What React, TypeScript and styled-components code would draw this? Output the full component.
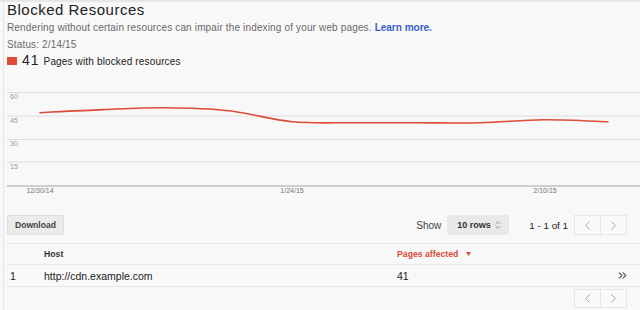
import React from 'react';
import styled, { createGlobalStyle } from 'styled-components';
import { ChevronLeft, ChevronRight, ChevronsRight, ChevronsUpDown } from 'lucide-react';

const GlobalStyle = createGlobalStyle`
  html, body {
    margin: 0;
    padding: 0;
    background: #f8f8f8;
  }
  body {
    font-family: 'Liberation Sans', Arial, sans-serif;
    color: #222;
  }
`;

const Frame = styled.div`
  border-top: 2px solid #e6e6e6;
  min-height: 308px;
`;

const Page = styled.div`
  margin-left: 3px;
  padding-left: 3px;
  border-left: 1px solid #e4e4e4;
  min-height: 308px;
  box-sizing: border-box;
`;

const Title = styled.h1`
  margin: 0;
  font-size: 15px;
  letter-spacing: 0.5px;
  line-height: 16px;
  font-weight: normal;
  color: #222;
`;

const Lead = styled.div`
  margin-top: 3px;
  font-size: 10px;
  letter-spacing: 0.15px;
  line-height: 14px;
  color: #6a6a6a;
`;

const LearnMore = styled.a`
  color: #3a5fcd;
  font-weight: bold;
  text-decoration: none;
  letter-spacing: 0;
`;

const Status = styled(Lead)``;

const CountRow = styled.div`
  display: flex;
  align-items: baseline;
  height: 16px;
  line-height: 16px;
`;

const Swatch = styled.span`
  align-self: center;
  width: 10px;
  height: 8px;
  margin-top: 1px;
  background: #dd4b39;
`;

const CountNumber = styled.span`
  margin-left: 5px;
  font-size: 14px;
  letter-spacing: 1px;
  color: #222;
`;

const CountLabel = styled.span`
  margin-left: 4px;
  font-size: 10px;
  letter-spacing: 0.15px;
  color: #222;
`;

const ChartBox = styled.svg`
  display: block;
  margin-top: 18px;
`;

const Controls = styled.div`
  display: flex;
  align-items: center;
  height: 20px;
  margin-top: 17px;
  padding-right: 13px;
`;

const Button = styled.button`
  height: 20px;
  width: 57px;
  padding: 0;
  background: #ebebeb;
  border: 1px solid #dedede;
  border-radius: 2px;
  font-family: inherit;
  font-size: 8.6px;
  font-weight: bold;
  color: #444;
`;

const Spacer = styled.div`
  flex: 1;
`;

const ShowLabel = styled.span`
  font-size: 10px;
  color: #444;
`;

const RowsSelect = styled.div`
  display: flex;
  align-items: center;
  justify-content: space-between;
  box-sizing: border-box;
  width: 62px;
  height: 20px;
  margin-left: 6px;
  padding: 0 6px 0 10px;
  background: #e9e9e9;
  border-radius: 2px;
  font-size: 9px;
  font-weight: bold;
  color: #333;
`;

const RangeText = styled.span`
  margin-left: 20px;
  font-size: 9.8px;
  color: #222;
`;

const Pager = styled.div`
  display: flex;
  margin-left: 6px;
`;

const PagerButton = styled.div`
  display: flex;
  align-items: center;
  justify-content: center;
  width: 27px;
  height: ${p => p.$h}px;
  box-sizing: border-box;
  border: 1px solid #e6e6e6;
  background: #fafafa;
  color: #999;
  & + & {
    margin-left: -1px;
  }
`;

const Table = styled.div`
  margin-top: 8px;
`;

const Row = styled.div`
  display: grid;
  grid-template-columns: 37px 353px 1fr 24px;
  align-items: center;
  height: ${p => p.$h}px;
  border-bottom: 1px solid #e6e6e6;
  border-top: ${p => (p.$first ? '1px solid #e6e6e6' : 'none')};
`;

const HeadCell = styled.div`
  font-size: 8.7px;
  font-weight: bold;
  color: ${p => (p.$active ? '#dd4b39' : '#333')};
  display: flex;
  align-items: center;
`;

const Cell = styled.div`
  font-size: 10.5px;
  color: #222;
  padding-left: ${p => p.$pad || 0}px;
`;

const MoreCell = styled.div`
  display: flex;
  align-items: center;
  color: #555;
`;

const FooterPager = styled.div`
  display: flex;
  justify-content: flex-end;
  margin-top: 2px;
  padding-right: 13px;
`;

const points: [number, number][] = [
  [40, 112.7],
  [103, 109.6],
  [166, 107.8],
  [229, 110.8],
  [292, 121.7],
  [355, 122.7],
  [418, 122.8],
  [481, 122.7],
  [544, 119.7],
  [608, 121.7],
];

const smoothPath = (pts: [number, number][]) => {
  let d = `M${pts[0][0]},${pts[0][1]}`;
  for (let i = 0; i < pts.length - 1; i++) {
    const p0 = pts[i - 1] || pts[i];
    const p1 = pts[i];
    const p2 = pts[i + 1];
    const p3 = pts[i + 2] || p2;
    const c1x = p1[0] + (p2[0] - p0[0]) / 6;
    const c1y = p1[1] + (p2[1] - p0[1]) / 6;
    const c2x = p2[0] - (p3[0] - p1[0]) / 6;
    const c2y = p2[1] - (p3[1] - p1[1]) / 6;
    d += ` C${c1x},${c1y} ${c2x},${c2y} ${p2[0]},${p2[1]}`;
  }
  return d;
};

const grid = [
  { y: 92.5, label: '60' },
  { y: 116, label: '45' },
  { y: 139.5, label: '30' },
  { y: 162, label: '15' },
];

const xLabels = [
  { x: 40, label: '12/30/14' },
  { x: 292, label: '1/24/15' },
  { x: 545, label: '2/10/15' },
];

const Chart = () => (
  <ChartBox width="633" height="112" viewBox="7 86 633 112">
    {grid.map(g => (
      <g key={g.label}>
        <line x1="7" x2="640" y1={g.y} y2={g.y} stroke="#dedede" strokeWidth="1" />
        <text x="10" y={g.y + 6.5} fontSize="7" fill="#999" fontFamily="Liberation Sans, Arial, sans-serif">
          {g.label}
        </text>
      </g>
    ))}
    <rect x="7" y="185" width="633" height="2" fill="#cfcfcf" />
    {xLabels.map(l => (
      <text key={l.label} x={l.x} y="193" fontSize="7" fill="#777" textAnchor="middle" fontFamily="Liberation Sans, Arial, sans-serif">
        {l.label}
      </text>
    ))}
    <path d={smoothPath(points)} fill="none" stroke="#dd4b39" strokeWidth="1.6" strokeLinecap="round" />
  </ChartBox>
);

const PagerButtons = ({ h }: { h: number }) => (
  <Pager>
    <PagerButton $h={h}><ChevronLeft size={15} strokeWidth={1.4} /></PagerButton>
    <PagerButton $h={h}><ChevronRight size={15} strokeWidth={1.4} /></PagerButton>
  </Pager>
);

const SortArrow = () => (
  <svg width="5" height="4" viewBox="0 0 5 4" style={{ marginLeft: 8 }}>
    <path d="M0 0 L5 0 L2.5 4 Z" fill="#dd4b39" />
  </svg>
);

const App = () => (
  <>
    <GlobalStyle />
    <Frame>
      <Page>
        <Title>Blocked Resources</Title>
        <Lead>
          Rendering without certain resources can impair the indexing of your web pages.{' '}
          <LearnMore href="#">Learn more.</LearnMore>
        </Lead>
        <Status>Status: 2/14/15</Status>
        <CountRow>
          <Swatch />
          <CountNumber>41</CountNumber>
          <CountLabel>Pages with blocked resources</CountLabel>
        </CountRow>

        <Chart />

        <Controls>
          <Button>Download</Button>
          <Spacer />
          <ShowLabel>Show</ShowLabel>
          <RowsSelect>
            10 rows
            <ChevronsUpDown size={10} strokeWidth={2} color="#888" />
          </RowsSelect>
          <RangeText>1 - 1 of 1</RangeText>
          <PagerButtons h={20} />
        </Controls>

        <Table>
          <Row $h={20} $first>
            <HeadCell />
            <HeadCell>Host</HeadCell>
            <HeadCell $active>
              Pages affected
              <SortArrow />
            </HeadCell>
            <HeadCell />
          </Row>
          <Row $h={21}>
            <Cell $pad={3}>1</Cell>
            <Cell>http://cdn.example.com</Cell>
            <Cell>41</Cell>
            <MoreCell><ChevronsRight size={13} strokeWidth={2} /></MoreCell>
          </Row>
        </Table>

        <FooterPager>
          <PagerButtons h={19} />
        </FooterPager>
      </Page>
    </Frame>
  </>
);

export default App;
